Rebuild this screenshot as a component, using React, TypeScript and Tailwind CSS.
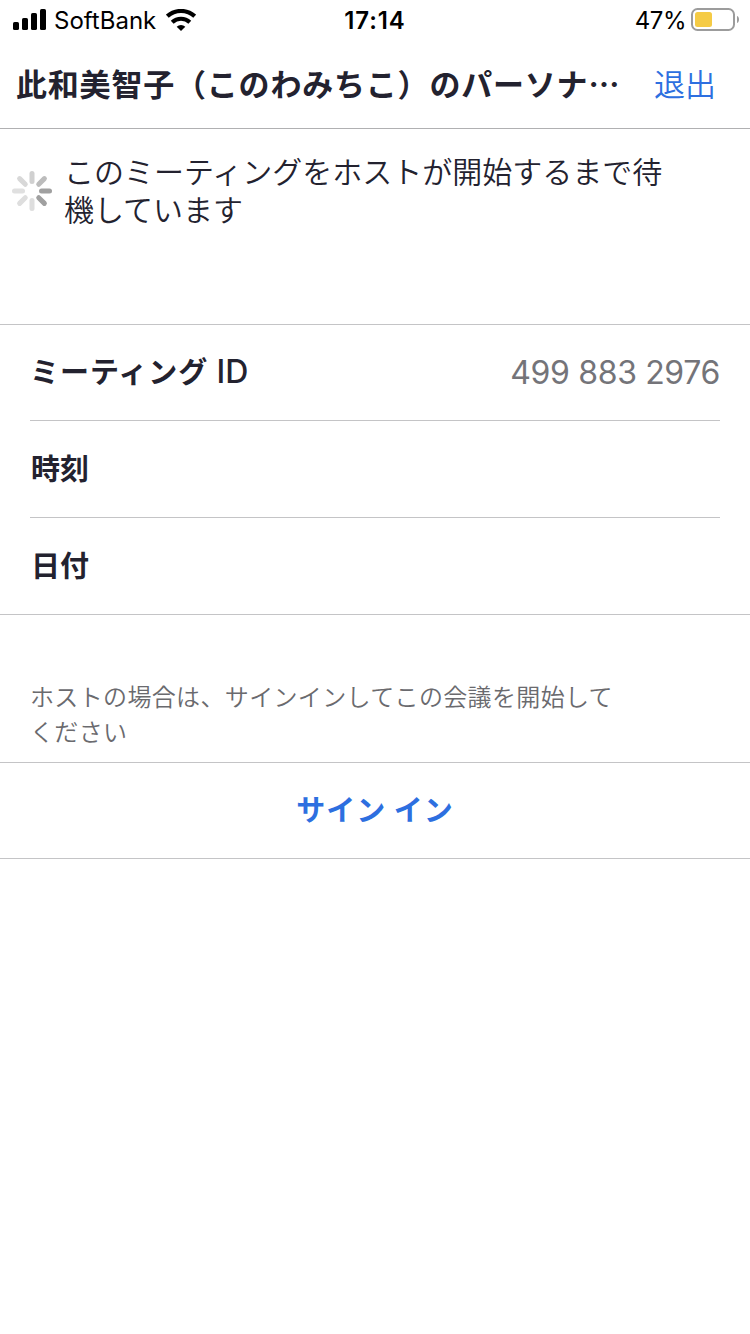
import { clsx } from 'clsx';

const SPOKES = ['#d0d0d0', '#bcbcbc', '#a0a0a0', '#a0a0a0', '#dedede', '#dedede', '#e0e0e0', '#d8d8d8'];

const ROWS = [
    { label: 'ミーティング', suffix: 'ID', value: '499 883 2976' },
    { label: '時刻', suffix: '', value: '' },
    { label: '日付', suffix: '', value: '' },
];

const StatusBar: React.FC = () => (
    <div className="grid h-10 grid-cols-3 items-center text-black">
        <div className="flex items-center pl-[13px]">
            <svg width="34" height="22" viewBox="0 0 34 22" className="shrink-0">
                <rect x="0" y="13" width="6" height="8" rx="1.6" />
                <rect x="9" y="9" width="6" height="12" rx="1.6" />
                <rect x="18" y="4" width="6" height="17" rx="1.6" />
                <rect x="27" y="0" width="6" height="21" rx="1.6" />
            </svg>
            <span className="ml-[7px] pt-0.5 text-[24px]">SoftBank</span>
            <svg width="30" height="22" viewBox="0 0 30 22" className="ml-[10px] shrink-0" fill="none" stroke="#000">
                <path d="M1.3 7.2a20.5 20.5 0 0 1 27.4 0" strokeWidth="4.2" />
                <path d="M6.2 13.2a13 13 0 0 1 17.6 0" strokeWidth="4.2" />
                <path d="M15 22l-4.3-4.3a6.2 6.2 0 0 1 8.6 0z" fill="#000" stroke="none" />
            </svg>
        </div>
        <div className="pt-0.5 text-center text-[24px] font-semibold tracking-[0.9px]">17:14</div>
        <div className="flex items-center justify-end pr-[11px]">
            <span className="pt-0.5 text-[24px] tracking-[-0.5px]">47%</span>
            <svg width="48" height="24" viewBox="0 0 48 24" className="ml-[5px] shrink-0">
                <rect x="1" y="1" width="42" height="21" rx="5.5" fill="none" stroke="#9c9c9c" strokeWidth="2" />
                <rect x="4" y="4" width="17" height="15" rx="2.5" fill="#f5cb45" />
                <path d="M46 8c1.6.6 2 2 2 3.5s-.4 2.9-2 3.5z" fill="#9c9c9c" />
            </svg>
        </div>
    </div>
);

const Spinner: React.FC = () => (
    <svg width="40" height="40" viewBox="0 0 40 40" className="shrink-0">
        {SPOKES.map((color, i) => (
            <line
                key={i}
                x1="20"
                y1="2.5"
                x2="20"
                y2="10.5"
                stroke={color}
                strokeWidth="5"
                strokeLinecap="round"
                transform={`rotate(${i * 45} 20 20)`}
            />
        ))}
    </svg>
);

const App: React.FC = () => {
    return (
        <div
            lang="ja"
            className="flex min-h-screen w-full flex-col bg-white font-['Inter','Noto_Sans_CJK_JP',sans-serif] text-[#23222f]"
        >
            <StatusBar />
            <header className="flex h-[89px] items-center justify-between border-b border-[#b0b0b2] pr-[34px] pl-4">
                <h1 className="pb-px font-['Noto_Sans_CJK_JP',sans-serif] text-[31px] font-bold tracking-[0.8px] whitespace-nowrap">
                    此和美智子（このわみちこ）のパーソナ…
                </h1>
                <button className="pt-[3px] text-[31px] font-[350] text-[#2d6fe0]">退出</button>
            </header>

            <div className="flex h-[195px] items-start pt-6 pl-3">
                <div className="pt-[18px]">
                    <Spinner />
                </div>
                <p className="ml-3 text-[30px] leading-[38px] font-[350]">
                    このミーティングをホストが開始するまで待
                    <br />
                    機しています
                </p>
            </div>

            <div className="border-y border-[#c4c4c6] px-[30px]">
                {ROWS.map((row, i) => (
                    <div
                        key={row.label}
                        className={clsx(
                            'flex items-center justify-between',
                            i === 2 ? 'h-24' : 'border-b border-[#c4c4c6]',
                            i === 0 && 'h-24',
                            i === 1 && 'h-[97px]'
                        )}
                    >
                        <span
                            className={clsx(
                                'text-[29px] font-bold',
                                i === 0 ? 'pb-0.5 tracking-[1px]' : 'pt-0.5 pl-px'
                            )}
                        >
                            {row.label}
                            {row.suffix && (
                                <span className="text-[32px] font-medium tracking-[-0.2px]"> {row.suffix}</span>
                            )}
                        </span>
                        <span className="text-[32px] tracking-[-0.35px] text-[#747479]">{row.value}</span>
                    </div>
                ))}
            </div>

            <p className="h-[147px] pt-[65px] pl-[30px] text-[24px] leading-[35px] font-[350] tracking-[0.35px] text-[#6a6a6e]">
                ホストの場合は、サインインしてこの会議を開始して
                <br />
                ください
            </p>
            <button className="h-[97px] w-full border-y border-[#c4c4c6] text-[29px] font-bold tracking-[0.9px] text-[#2d6fe0]">
                サイン イン
            </button>
        </div>
    );
};

export default App;
